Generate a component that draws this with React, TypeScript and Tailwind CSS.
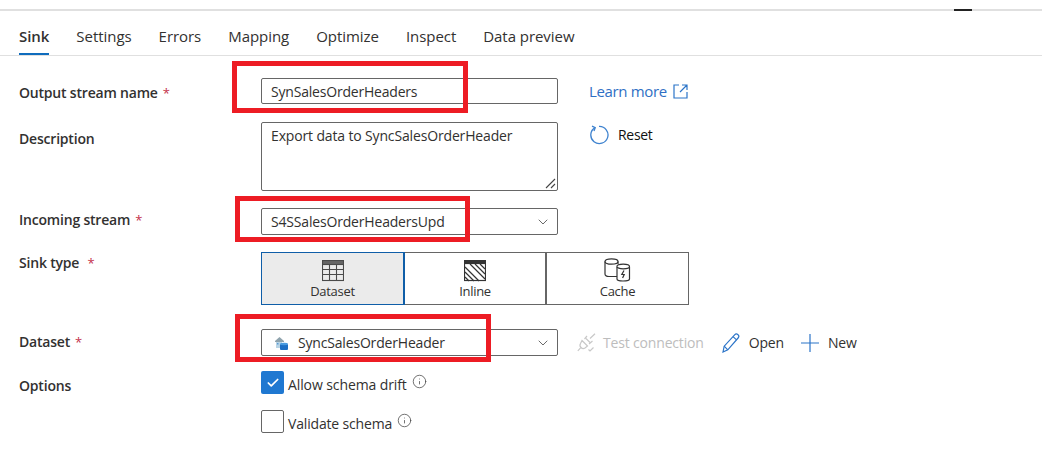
import React from 'react';
import { ChevronDown, Check, Info } from 'lucide-react';

const font = { fontFamily: '"Open Sans", "Noto Sans", sans-serif' };

const tabs = ['Sink', 'Settings', 'Errors', 'Mapping', 'Optimize', 'Inspect', 'Data preview'];

function Label({ text, required, className }: { text: string; required?: boolean; className?: string }) {
  return (
    <div className={`w-[242px] shrink-0 text-[14px] font-semibold leading-[20px] tracking-[-0.2px] text-[#323130] ${className || ''}`}>
      {text}
      {required && <span className="ml-[5px] text-[13px] font-normal text-[#c4314b]">*</span>}
    </div>
  );
}

function SelectBox({ children }: { children: React.ReactNode }) {
  return (
    <div className="flex h-[27px] w-[297px] items-center justify-between rounded-[2px] border border-[#666] pl-[9px] pr-[6px] text-[14px] tracking-[-0.18px] text-[#323130]">
      <div className="flex items-center">{children}</div>
      <ChevronDown size={16} strokeWidth={1.2} color="#444" />
    </div>
  );
}

function RedBox({ className }: { className: string }) {
  return <div className={`pointer-events-none absolute border-[5px] border-[#ed1c24] ${className}`} />;
}

function TableIcon() {
  return (
    <svg width="22" height="22" viewBox="0 0 22 22" fill="none" stroke="#4a4a4a" strokeWidth="1.1">
      <rect x="0.5" y="0.5" width="21" height="20" />
      <rect x="0.5" y="0.5" width="21" height="4" fill="#666" />
      <path d="M0.5 9.5H21.5M0.5 14.5H21.5M7.5 4.5V20.5M14.5 4.5V20.5" />
    </svg>
  );
}

function InlineIcon() {
  return (
    <svg width="22" height="22" viewBox="0 0 22 22" fill="none" stroke="#333" strokeWidth="1.2">
      <rect x="0.5" y="0.5" width="21" height="20" />
      <rect x="0.5" y="0.5" width="21" height="3" fill="#333" />
      <path d="M1 7L15 21M1 12L10 21M1 17L5 21M6 4L21 19M11 4L21 14M16 4L21 9" />
    </svg>
  );
}

function CacheIcon() {
  return (
    <svg width="27" height="24" viewBox="0 0 27 24" fill="none" stroke="#333" strokeWidth="1.2">
      <path d="M13 18.5H5C2.5 18.5 1 17.5 1 16V3.5C1 2 3.5 0.8 7.5 0.8S14 2 14 3.5V6" />
      <path d="M1 3.5C1 5 3.5 6.2 7.5 6.2S14 5 14 3.5" />
      <path d="M13 9V21C13 22.2 15.5 23 19 23S25.5 22.2 25.5 21V9" fill="#fff" />
      <ellipse cx="19.2" cy="8.5" rx="6.3" ry="2.3" fill="#fff" />
      <path d="M20 12.5L17.8 16.5H20.2L18.6 20" strokeWidth="1.2" />
    </svg>
  );
}

function DatasetGlyph() {
  return (
    <svg width="14" height="14" viewBox="0 0 14 14">
      <path d="M1 5L5.5 1L10 5V6H1Z" fill="#8fa3ad" />
      <rect x="2" y="6" width="6" height="6" fill="#b8d4e6" />
      <rect x="3" y="7" width="1.5" height="1.5" fill="#5b9bd5" />
      <rect x="6" y="8" width="8" height="6" rx="1" fill="#1e6fc4" />
      <ellipse cx="10" cy="8" rx="4" ry="1.2" fill="#4a9be0" />
    </svg>
  );
}

function PlugCheckIcon() {
  return (
    <svg width="19" height="19" viewBox="0 0 19 19" fill="none" stroke="#c8c8c8" strokeWidth="1.2">
      <path d="M5 7.5L10.5 13L8 15C6.5 16 5 15.5 4 14.5C3 13.5 2.6 12 3.5 10.5Z" />
      <path d="M3.8 14.7L0.8 17.8M7.5 6L10 3M12 11L15.5 8M9 5.5L13.5 10M13 5.5L18 0.8" />
      <path d="M11.5 16.5L13 18L16.5 14.5" />
    </svg>
  );
}

function PencilIcon() {
  return (
    <svg width="18" height="20" viewBox="0 0 18 20" fill="none" stroke="#2b74c8" strokeWidth="1.2">
      <path d="M1 19L2.2 13.2L12.6 1.8C13.6 0.8 15 0.8 16 1.7C17 2.6 17 4 16.1 5L5.8 16.8Z" />
      <path d="M11 3.6L14.6 6.9M2.2 13.2L5.8 16.8" />
    </svg>
  );
}

function PlusIcon() {
  return (
    <svg width="18" height="18" viewBox="0 0 18 18" fill="none" stroke="#2b74c8" strokeWidth="1.2">
      <path d="M9 0V18M0 9H18" />
    </svg>
  );
}

export default function App() {
  return (
    <div className="relative h-[461px] w-[1042px] overflow-hidden bg-white" style={font}>
      <div className="pt-[9px]">
        <div className="flex h-[2px] w-full justify-center bg-[#e0e0e0]">
          <div className="ml-[884px] h-[2px] w-[18px] bg-[#222]" />
        </div>
      </div>

      {/* tabs */}
      <div className="flex h-[45px] gap-[27px] border-b border-[#e0e0e0] pl-[19px] pt-[14px]">
        {tabs.map((t, i) => (
          <div
            key={t}
            className={`relative h-[30px] text-[15px] leading-[22px] tracking-[-0.05px] text-[#323130] ${i === 0 ? 'font-semibold' : ''}`}
          >
            {t}
            {i === 0 && <div className="absolute bottom-0 left-0 right-0 h-[2px] bg-[#0f6cbd]" />}
          </div>
        ))}
      </div>

      <div className="pl-[19px] pt-[22px]">
        {/* output stream name */}
        <div className="flex items-center">
          <Label text="Output stream name" required className="pt-[3px]" />
          <div className="flex h-[26px] w-[297px] items-center rounded-[2px] border border-[#666] pl-[9px] text-[14px] tracking-[-0.2px] text-[#323130]">
            SynSalesOrderHeaders
          </div>
          <div className="ml-[31px] flex items-center gap-[6px] text-[15px] tracking-[-0.35px] text-[#2f6fc4]">
            Learn more
            <svg width="15" height="15" viewBox="0 0 15 15" fill="none" stroke="#2b74c8" strokeWidth="1.2">
              <path d="M6 1H1V14H14V8M9 1H14V6M14 1L7 8" />
            </svg>
          </div>
        </div>

        {/* description */}
        <div className="mt-[18px] flex items-start">
          <Label text="Description" className="pt-[7px]" />
          <div className="relative h-[69px] w-[297px] rounded-[2px] border border-[#666] pl-[9px] pt-[3px] text-[14px] leading-[20px] tracking-[-0.15px] text-[#323130]">
            Export data to SyncSalesOrderHeader
            <svg className="absolute bottom-[1px] right-[1px]" width="11" height="11" viewBox="0 0 11 11" stroke="#444" strokeWidth="1.1">
              <path d="M1 10L10 1M6 10L10 6" />
            </svg>
          </div>
          <div className="ml-[31px] flex items-center gap-[9px] pt-[2px] text-[14px] tracking-[-0.3px] text-[#111]">
            <svg width="20" height="20" viewBox="0 0 20 20" fill="none" stroke="#3f83cf" strokeWidth="1.3">
              <path d="M6 2.6A8.6 8.6 0 1 0 10 1.4" />
              <path d="M3 1.2L6.2 2.6L5 6" />
            </svg>
            Reset
          </div>
        </div>

        {/* incoming stream */}
        <div className="mt-[17px] flex items-center">
          <Label text="Incoming stream" required className="pb-[3px]" />
          <SelectBox>S4SSalesOrderHeadersUpd</SelectBox>
        </div>

        {/* sink type */}
        <div className="mt-[17px] flex items-start">
          <Label text={'Sink type\u00a0'} required className="pt-[1px]" />
          <div className="flex h-[53px] w-[428px] text-[13px] tracking-[-0.3px] text-[#323130]">
            <div className="flex w-[144px] flex-col items-center border-y border-l border-r-2 border-[#0f5ea8] bg-[#ebebeb] pt-[7px]">
              <TableIcon />
              <span className="mt-[1px] leading-[17px]">Dataset</span>
            </div>
            <div className="flex w-[142px] flex-col items-center border-y border-r-2 border-[#666] pt-[7px]">
              <InlineIcon />
              <span className="mt-[1px] leading-[17px]">Inline</span>
            </div>
            <div className="flex w-[142px] flex-col items-center border-y border-r border-[#666] pt-[5px]">
              <CacheIcon />
              <span className="mt-[1px] leading-[17px]">Cache</span>
            </div>
          </div>
        </div>

        {/* dataset */}
        <div className="mt-[24px] flex items-center">
          <Label text="Dataset" required className="pb-[2px]" />
          <SelectBox>
            <span className="ml-[3px] mr-[10px] flex">
              <DatasetGlyph />
            </span>
            SyncSalesOrderHeader
          </SelectBox>
          <div className="ml-[19px] flex items-center text-[14px] tracking-[-0.17px] text-[#323130]">
            <span className="flex items-center gap-[7px] text-[#bdbdbd]">
              <PlugCheckIcon />
              Test connection
            </span>
            <span className="ml-[18px] flex items-center gap-[9px]">
              <PencilIcon />
              Open
            </span>
            <span className="ml-[17px] flex items-center gap-[9px]">
              <PlusIcon />
              New
            </span>
          </div>
        </div>

        {/* options */}
        <div className="mt-[15px] flex items-start">
          <Label text="Options" className="pt-[5px]" />
          <div className="flex flex-col gap-[16px] text-[14px] tracking-[-0.1px] text-[#323130]">
            <div className="flex h-[23px] items-center gap-[4px]">
              <div className="flex h-[23px] w-[23px] items-center justify-center rounded-[2px] bg-[#1f78d1]">
                <Check size={14} strokeWidth={3} color="#fff" />
              </div>
              <span className="pt-[3px]">Allow schema drift</span>
              <Info size={15} strokeWidth={1.2} color="#444" className="mb-[3px] ml-[1px]" />
            </div>
            <div className="flex h-[23px] items-center gap-[4px]">
              <div className="h-[23px] w-[23px] rounded-[2px] border border-[#666]" />
              <span className="pt-[3px] tracking-[-0.17px]">Validate schema</span>
              <Info size={15} strokeWidth={1.2} color="#444" className="mb-[3px] ml-[1px]" />
            </div>
          </div>
        </div>
      </div>

      {/* annotation boxes drawn over the form */}
      <RedBox className="left-[232px] top-[61px] h-[52px] w-[236px]" />
      <RedBox className="left-[235px] top-[196px] h-[46px] w-[235px]" />
      <RedBox className="left-[235px] top-[314px] h-[48px] w-[256px]" />
    </div>
  );
}
